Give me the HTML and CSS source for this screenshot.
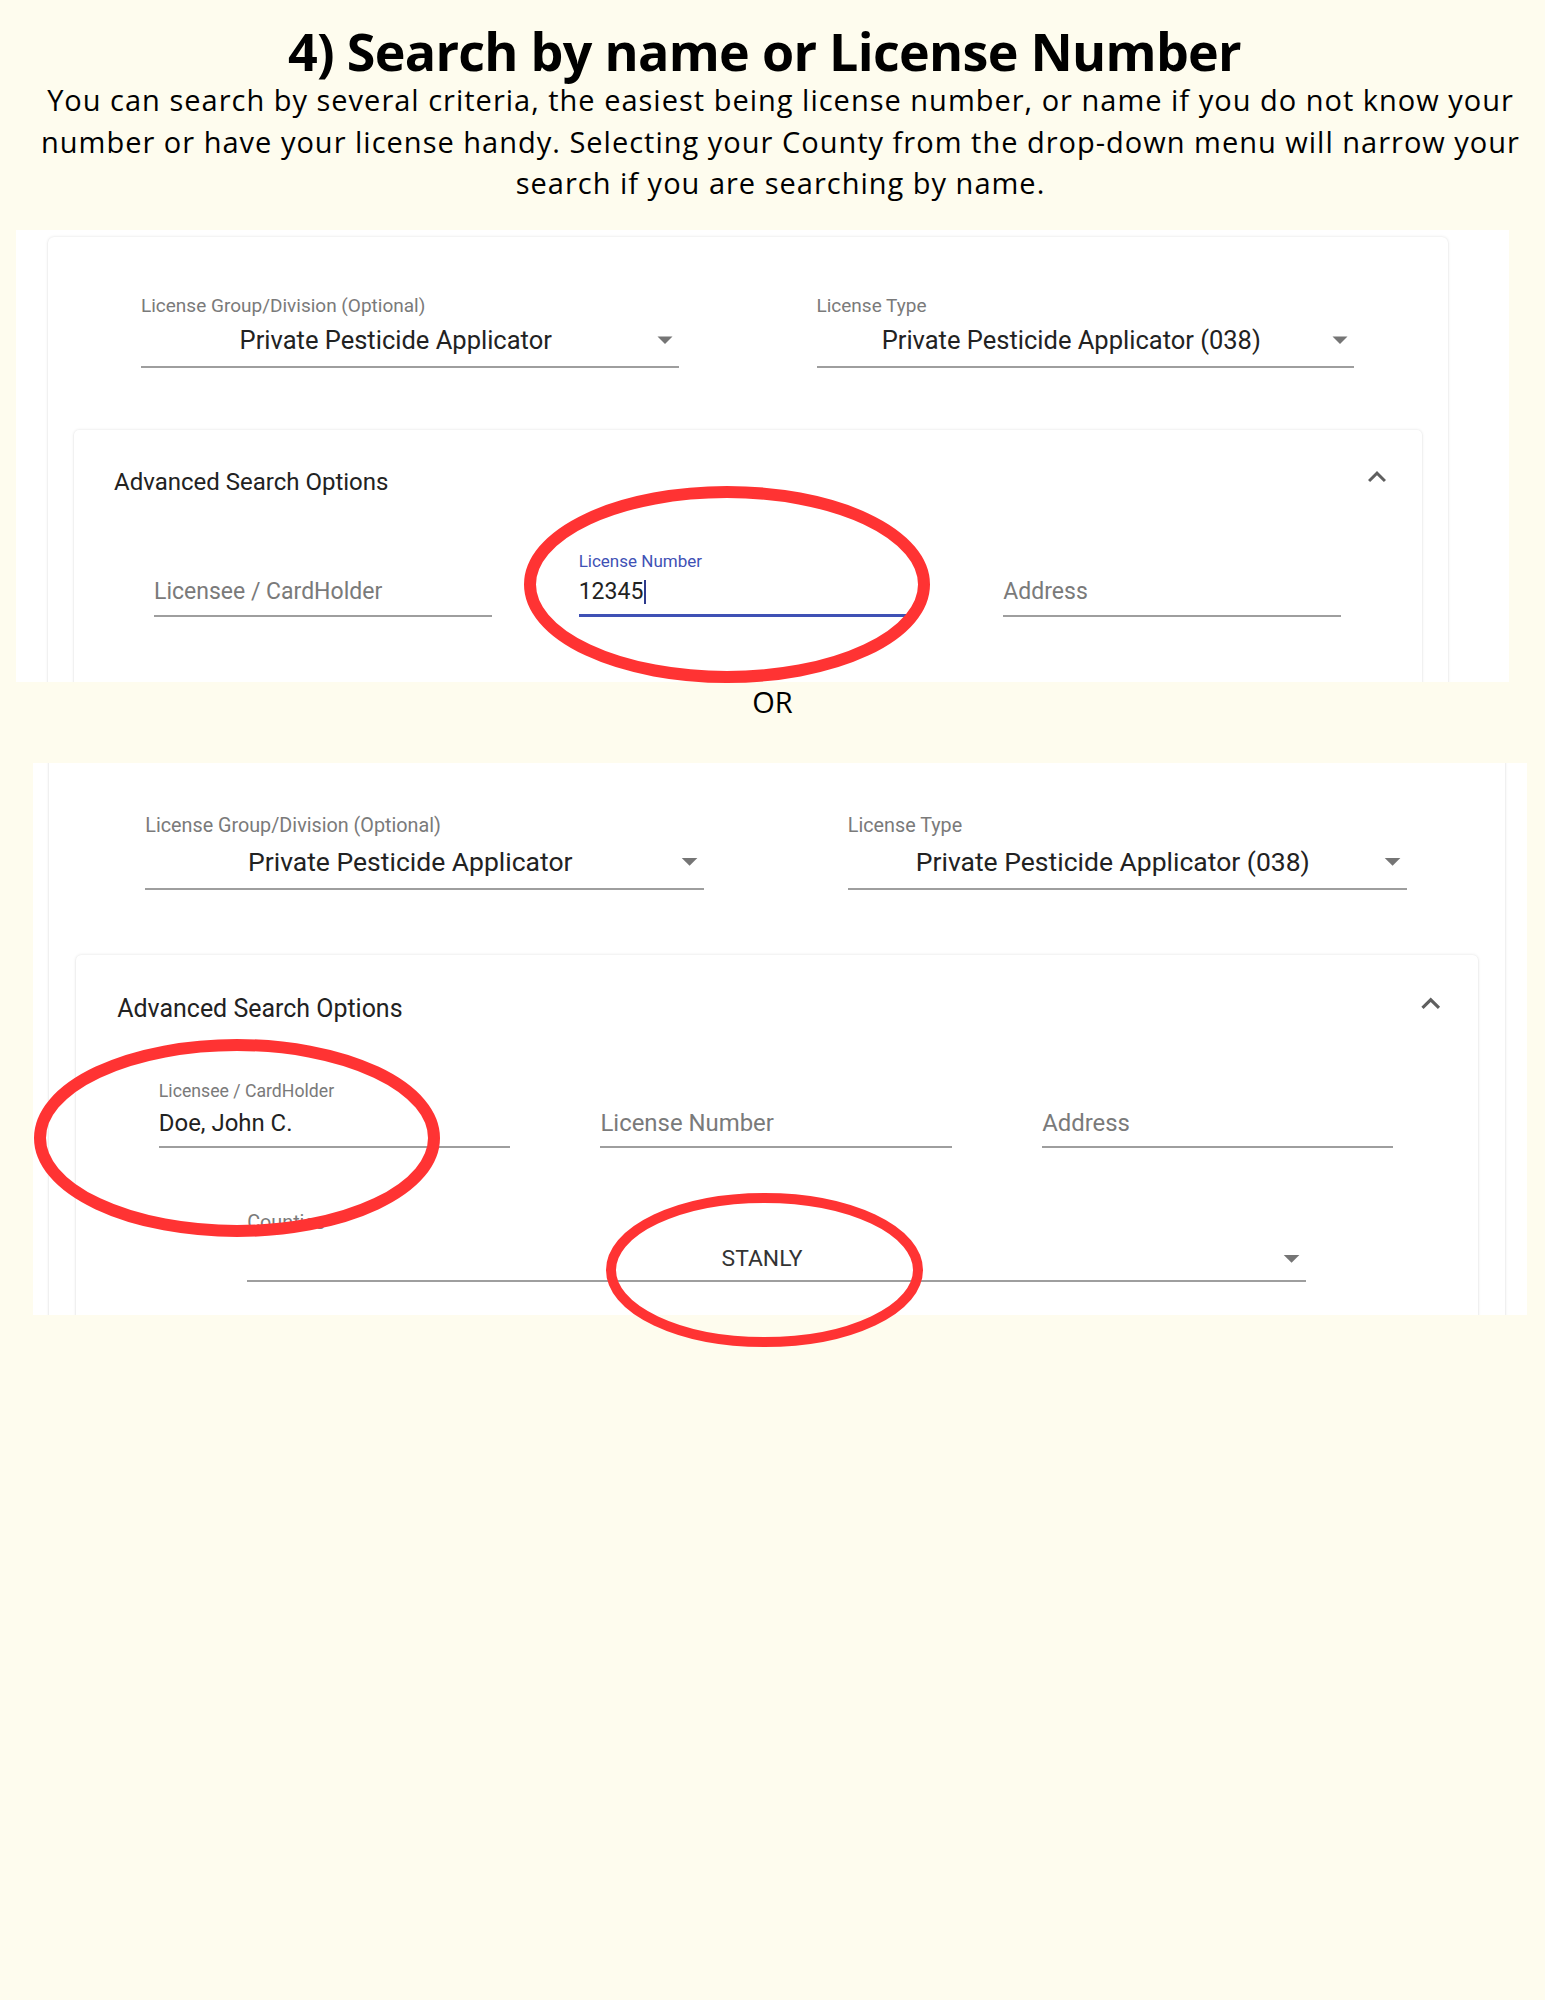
FILE: index.html
```html
<!DOCTYPE html>
<html lang="en">
<head>
    <meta charset="UTF-8">
    <meta name="viewport" content="width=device-width, initial-scale=1.0">
    <title>Search by name or License Number</title>
    <link rel="stylesheet" href="styles.css">
</head>
<body>
    <header class="intro">
        <h1>4) Search by name or License Number</h1>
        <p>You can search by several criteria, the easiest being license number, or name if you do not know your<br>number or have your license handy. Selecting your County from the drop-down menu will narrow your<br>search if you are searching by name.</p>
    </header>

    <!-- first screenshot: search by license number -->
    <section class="shot shot-number">
        <div class="shot-frame">
            <div class="card">
                <div class="select-row">
                    <div class="select">
                        <span class="select-label">License Group/Division (Optional)</span>
                        <div class="select-value"><span>Private Pesticide Applicator</span><svg class="select-arrow" viewBox="0 0 28 28"><path d="M6.5 10.5h15L14 18z"/></svg></div>
                    </div>
                    <div class="select">
                        <span class="select-label">License Type</span>
                        <div class="select-value"><span>Private Pesticide Applicator (038)</span><svg class="select-arrow" viewBox="0 0 28 28"><path d="M6.5 10.5h15L14 18z"/></svg></div>
                    </div>
                </div>
                <div class="panel">
                    <div class="panel-head">
                        <span>Advanced Search Options</span>
                        <svg class="panel-toggle" viewBox="0 0 24 24"><path d="M12 8l-6 6 1.41 1.41L12 10.83l4.59 4.58L18 14z"/></svg>
                    </div>
                    <div class="field-row">
                        <div class="field field-empty">
                            <span class="field-label">&nbsp;</span>
                            <div class="field-value">Licensee / CardHolder</div>
                        </div>
                        <div class="field field-focus">
                            <span class="field-label">License Number</span>
                            <div class="field-value">12345<span class="caret"></span></div>
                        </div>
                        <div class="field field-empty">
                            <span class="field-label">&nbsp;</span>
                            <div class="field-value">Address</div>
                        </div>
                    </div>
                </div>
            </div>
        </div>
        <svg class="ring ring-number" viewBox="0 0 406 197"><ellipse cx="203" cy="98.5" rx="197" ry="92.5"/></svg>
    </section>

    <p class="or">OR</p>

    <!-- second screenshot: search by name and county -->
    <section class="shot shot-name">
        <div class="shot-frame">
            <div class="card">
                <div class="select-row">
                    <div class="select">
                        <span class="select-label">License Group/Division (Optional)</span>
                        <div class="select-value"><span>Private Pesticide Applicator</span><svg class="select-arrow" viewBox="0 0 28 28"><path d="M6.5 10.5h15L14 18z"/></svg></div>
                    </div>
                    <div class="select">
                        <span class="select-label">License Type</span>
                        <div class="select-value"><span>Private Pesticide Applicator (038)</span><svg class="select-arrow" viewBox="0 0 28 28"><path d="M6.5 10.5h15L14 18z"/></svg></div>
                    </div>
                </div>
                <div class="panel">
                    <div class="panel-head">
                        <span>Advanced Search Options</span>
                        <svg class="panel-toggle" viewBox="0 0 24 24"><path d="M12 8l-6 6 1.41 1.41L12 10.83l4.59 4.58L18 14z"/></svg>
                    </div>
                    <div class="field-row">
                        <div class="field">
                            <span class="field-label">Licensee / CardHolder</span>
                            <div class="field-value">Doe, John C.</div>
                        </div>
                        <div class="field field-empty">
                            <span class="field-label">&nbsp;</span>
                            <div class="field-value">License Number</div>
                        </div>
                        <div class="field field-empty">
                            <span class="field-label">&nbsp;</span>
                            <div class="field-value">Address</div>
                        </div>
                    </div>
                    <div class="county-row">
                        <div class="select select-county">
                            <span class="select-label">Counties</span>
                            <div class="select-value"><span>STANLY</span><svg class="select-arrow" viewBox="0 0 28 28"><path d="M6.5 10.5h15L14 18z"/></svg></div>
                        </div>
                    </div>
                </div>
            </div>
        </div>
        <svg class="ring ring-name" viewBox="0 0 406 198"><ellipse cx="203" cy="99" rx="197" ry="93"/></svg>
        <svg class="ring ring-county" viewBox="0 0 317 154"><ellipse cx="158.5" cy="77" rx="153.5" ry="72"/></svg>
    </section>
</body>
</html>
```

FILE: styles.css
```css
html{
    background-color: #fefcee;
}
body{
    margin: 0;
    padding-bottom: 60px;
    font-family: "Open Sans", sans-serif;
    color: #000;
}

/* heading + intro text */
.intro{
    padding-top: 23px;
    text-align: center;
}
.intro h1{
    margin: 0;
    padding-right: 16px;
    font-size: 52px;
    line-height: 56px;
    letter-spacing: -0.7px;
    font-weight: 700;
}
.intro p{
    margin: 0;
    padding-left: 16px;
    font-size: 29px;
    line-height: 41.5px;
    letter-spacing: 1px;
    white-space: nowrap;
}

.or{
    margin: 0 0 41px;
    text-align: center;
    font-size: 29px;
    line-height: 40px;
}

/* screenshot frames */
.shot{
    position: relative;
}
.shot-number{
    margin: 26px 0 0 16px;
    width: 1493px;
}
.shot-name{
    margin-left: 33px;
    width: 1494px;
}
.shot-frame{
    background-color: #fff;
    overflow: hidden;
}
.shot-number .shot-frame{
    height: 452px;
}
.shot-name .shot-frame{
    height: 552px;
}

/* search card */
.card{
    box-sizing: border-box;
    width: 1400px;
    padding: 58px 26px 0;
    background-color: #fff;
    border-radius: 6px;
    box-shadow: 0 0 3px rgba(0, 0, 0, 0.13), 0 1px 2px rgba(0, 0, 0, 0.06);
    font-family: Roboto, sans-serif;
}
.shot-number .card{
    margin: 7px 0 0 32px;
}
.shot-name .card{
    zoom: 1.04;
    margin: -8px 0 0 15px;
}

.select-row{
    display: flex;
    gap: 138px;
    margin: 0 68px 0 67px;
}
.select{
    flex: 1;
    padding-bottom: 11px;
    border-bottom: 2px solid #9e9e9e;
}
.select-label{
    display: block;
    font-size: 19px;
    line-height: 22px;
    color: #7a7a7a;
}
.select-value{
    display: flex;
    align-items: center;
    margin-top: 8px;
    font-size: 25.5px;
    line-height: 30px;
    color: #222;
}
.select-value span{
    flex: 1;
    text-align: center;
}
.select-arrow{
    width: 28px;
    height: 28px;
    fill: #757575;
}

/* advanced search panel */
.panel{
    margin-top: 62px;
    padding: 37px 0 90px;
    border-radius: 5px;
    box-shadow: 0 0 3px rgba(0, 0, 0, 0.13), 0 1px 2px rgba(0, 0, 0, 0.06);
}
.panel-head{
    display: flex;
    justify-content: space-between;
    align-items: flex-start;
    padding: 0 27px 0 40px;
    font-size: 24px;
    line-height: 30px;
    color: #222;
}
.panel-toggle{
    width: 36px;
    height: 36px;
    margin-top: -8px;
    fill: #5f5f5f;
}

.field-row{
    display: flex;
    gap: 87px;
    padding: 0 81px 0 80px;
    margin-top: 54px;
}
.field{
    flex: 1;
    padding-bottom: 8px;
    border-bottom: 2px solid #9e9e9e;
}
.field-label{
    display: block;
    font-size: 17px;
    line-height: 20px;
    color: #7a7a7a;
}
.field-value{
    margin-top: 7px;
    font-size: 23px;
    line-height: 28px;
    color: #222;
}
.field-empty .field-value{
    color: #7a7a7a;
}
.field-focus{
    border-bottom: 3px solid #3f51b5;
}
.field-focus .field-label{
    color: #3f51b5;
}
.caret{
    display: inline-block;
    width: 2px;
    height: 24px;
    margin-left: 1px;
    vertical-align: -5px;
    background-color: #2d3a8c;
}

.county-row{
    padding: 0 165px;
    margin-top: 61px;
}
.select-county{
    padding-bottom: 6px;
}
.select-county .select-value{
    font-size: 22px;
    color: #333;
}

/* red hand-drawn circles */
.ring{
    position: absolute;
    overflow: visible;
    fill: none;
    stroke: #ff3333;
    stroke-width: 12;
}
.ring-number{
    left: 508px;
    top: 256px;
    width: 406px;
    height: 197px;
}
.ring-name{
    left: 1px;
    top: 276px;
    width: 406px;
    height: 198px;
}
.ring-county{
    left: 573px;
    top: 430px;
    width: 317px;
    height: 154px;
    stroke-width: 10;
}
```
